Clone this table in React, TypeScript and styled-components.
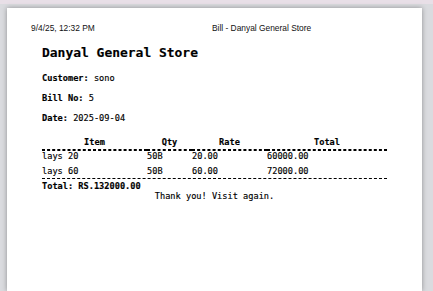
import React from 'react';
import styled, { createGlobalStyle } from 'styled-components';

const GlobalStyle = createGlobalStyle`
  html, body {
    margin: 0;
    padding: 0;
    background: #dadbdf;
    overflow: hidden;
  }
`;

const TopStrip = styled.div`
  height: 4px;
  background: #e8dfe7;
`;

const Viewer = styled.div`
  padding: 4px 0 0 7px;
`;

const Page = styled.div`
  width: 415px;
  height: calc(100vh - 8px);
  background: #fff;
  box-shadow: 0 0 5px rgba(0, 0, 0, 0.35);
  color: #000;
`;

const PrintHeader = styled.div`
  display: grid;
  grid-template-columns: 181px auto;
  padding: 15px 0 0 24px;
  font-family: 'Liberation Sans', Arial, sans-serif;
  font-size: 8.4px;
  line-height: 10px;
  color: #111;
`;

const Bill = styled.div`
  padding: 0 35px;
  font-family: 'DejaVu Sans Mono', 'Liberation Mono', monospace;
  font-size: 8.64px;
  line-height: 10px;
  -webkit-text-stroke: 0.15px #000;
`;

const StoreName = styled.h2`
  margin: 11.5px 0 13.4px;
  font-size: 12.96px;
  line-height: 15px;
  font-weight: bold;
`;

const Line = styled.p`
  margin: 0 0 10px;
`;

const Label = styled.b`
  font-weight: bold;
`;

const Items = styled.table`
  width: 100%;
  margin-top: 14px;
  border-collapse: separate;
  border-spacing: 0;
  table-layout: fixed;
`;

const Head = styled.th`
  padding: 0 0 1.7px;
  text-align: center;
  font-weight: bold;
  border-bottom: 1px dashed #000;
`;

const Cell = styled.td<{ $first?: boolean; $last?: boolean }>`
  padding: ${(p) => (p.$first ? '0.5px' : '1.5px')} 0 ${(p) => (p.$last ? '1.5px' : '3.5px')};
  text-align: left;
  border-top: ${(p) => (p.$first ? '1px dashed #000' : 'none')};
`;

const TotalLine = styled.div`
  padding-top: 2px;
  border-top: 1px dashed #000;
  font-weight: bold;
`;

const Thanks = styled.p`
  margin: 0;
  text-align: center;
`;

const items = [
  { name: 'lays 20', qty: '50B', rate: '20.00', total: '60000.00' },
  { name: 'lays 60', qty: '50B', rate: '60.00', total: '72000.00' },
];

export default function App() {
  return (
    <>
      <GlobalStyle />
      <TopStrip />
      <Viewer>
        <Page>
          <PrintHeader>
            <span>9/4/25, 12:32 PM</span>
            <span>Bill - Danyal General Store</span>
          </PrintHeader>
          <Bill>
            <StoreName>Danyal General Store</StoreName>
            <Line><Label>Customer:</Label> sono</Line>
            <Line><Label>Bill No:</Label> 5</Line>
            <Line><Label>Date:</Label> 2025-09-04</Line>
            <Items>
              <colgroup>
                <col style={{ width: 105 }} />
                <col style={{ width: 45 }} />
                <col style={{ width: 75 }} />
                <col style={{ width: 120 }} />
              </colgroup>
              <thead>
                <tr>
                  <Head>Item</Head>
                  <Head>Qty</Head>
                  <Head>Rate</Head>
                  <Head>Total</Head>
                </tr>
              </thead>
              <tbody>
                {items.map((it, i) => {
                  const first = i === 0;
                  const last = i === items.length - 1;
                  return (
                    <tr key={it.name}>
                      <Cell $first={first} $last={last}>{it.name}</Cell>
                      <Cell $first={first} $last={last}>{it.qty}</Cell>
                      <Cell $first={first} $last={last}>{it.rate}</Cell>
                      <Cell $first={first} $last={last}>{it.total}</Cell>
                    </tr>
                  );
                })}
              </tbody>
            </Items>
            <TotalLine>Total: RS.132000.00</TotalLine>
            <Thanks>Thank you! Visit again.</Thanks>
          </Bill>
        </Page>
      </Viewer>
    </>
  );
}
